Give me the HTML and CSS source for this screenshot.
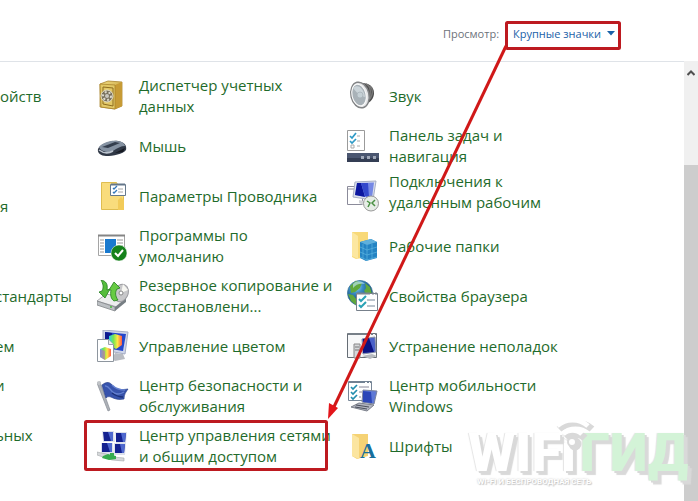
FILE: index.html
```
<!DOCTYPE html>
<html lang="ru">
<head>
    <meta charset="UTF-8">
    <title>Все элементы панели управления</title>
    <link rel="stylesheet" href="styles.css">
</head>
<body>

    <header class="toolbar">
        <span id="viewLabel">Просмотр:</span>
        <button class="view-btn" type="button" aria-describedby="viewLabel" aria-haspopup="true">
            Крупные значки
            <svg width="8" height="5" viewBox="0 0 8 5" aria-hidden="true"><path d="M0 0h8L4 4.600z" fill="#1a62a8"/></svg>
        </button>
    </header>

    <div class="content">
        <main class="items">
            <a class="item" href="#">ойств</a>
            <a class="item" href="#">
                <svg class="icon" viewBox="0 0 32 32">
                    <defs>
                        <linearGradient id="gold" x2="1" y2="1"><stop offset="0" stop-color="#f3df86"/><stop offset="1" stop-color="#b98e28"/></linearGradient>
                    </defs>
                    <path d="M3 4l8-3 14 1v24l-7 3-15-2z" fill="url(#gold)" stroke="#a9842c" stroke-width=".8"/>
                    <path d="M18 5l7-3v24l-7 3z" fill="#c79b35"/>
                    <path d="M3 4l15 1v24L4 27z" fill="#e2c866" stroke="#a9842c" stroke-width=".8"/>
                    <path d="M6 7l10 1v18L6 24z" fill="none" stroke="#8e6d21"/>
                    <circle cx="10" cy="16" r="6" fill="#77705e" stroke="#e5dfc9"/>
                    <circle cx="10" cy="16" r="4" fill="none" stroke="#dcd9cd" stroke-width="2" stroke-dasharray="2 2"/>
                    <circle cx="10" cy="16" r="2" fill="#c9c7c0"/>
                </svg>
                <span>Диспетчер учетных<br>данных</span>
            </a>
            <a class="item" href="#">
                <svg class="icon" viewBox="0 0 32 32">
                    <path d="M15 3c7 0 12 4 12 10 0 5-3 9-9 12z" fill="#4b4b4b"/>
                    <path d="M19 4c5 2 6 10 1 19M23 6c3 3 3 8 0 13" fill="none" stroke="#777" stroke-width="1.500"/>
                    <ellipse cx="13" cy="15" rx="9" ry="13" transform="rotate(-13 13 15)" fill="#e4e5e7" stroke="#818385" stroke-width="1.500"/>
                    <ellipse cx="12" cy="15" rx="7" ry="11" transform="rotate(-13 12 15)" fill="#a9b2b8" stroke="#fbfbfb"/>
                    <path d="M12 15L6 8c5-5 11 1 12 9z" fill="#cbd4d9"/>
                    <circle cx="13" cy="15" r="3" fill="#c5d0d5" stroke="#a5afb6" stroke-width=".7"/>
                </svg>
                <span>Звук</span>
            </a>

            <span></span>
            <a class="item" href="#">
                <svg class="icon" viewBox="0 0 32 32">
                    <path d="M1 19c2-5 14-9 20-8 6 1 9 4 8 9-3 4-13 6-20 6-5 0-9-3-8-7z" fill="#303846"/>
                    <path d="M2 17c3-4 12-7 18-6 5 0 8 3 8 5-4 0-8 2-12 5-4 2-12 1-14-4z" fill="#8592a2"/>
                    <path d="M2 20c4 3 9 4 14 1" fill="none" stroke="#bcc4ce" stroke-width="1.500"/>
                    <path d="M5 17l13-5 5 1-12 5z" fill="#343e4d"/>
                    <path d="M18 23l10-5-2 4z" fill="#151920"/>
                </svg>
                <span>Мышь</span>
            </a>
            <a class="item" href="#">
                <svg class="icon" viewBox="0 0 32 32">
                    <path d="M.5.500h17v20H.500z" fill="#fff" stroke="#9b9b9b"/>
                    <path d="M3 6l2 2 4-5M3 11l2 2 4-4" fill="none" stroke="#2e9ac6" stroke-width="1.700"/>
                    <path d="M4 15h3v3H4zM10 6h3M10 11h3M10 16h3" fill="none" stroke="#aaa"/>
                    <path d="M0 23h32v9H0z" fill="#4a5670"/>
                    <path d="M0 28h32v4H0z" fill="#343e54"/>
                    <path d="M14 26h3v3h-3zM20 26h3v3h-3zM26 26h3v3h-3z" fill="#a1a9b9"/>
                </svg>
                <span>Панель задач и<br>навигация</span>
            </a>

            <a class="item second-line" href="#">я</a>
            <a class="item" href="#">
                <svg class="icon" viewBox="0 0 32 32">
                    <path d="M4.500 2.500h15l7 14v13h-22z" fill="#f9dc7c" stroke="#dfbd50"/>
                    <path d="M21 30V20l3-3 3 3v10z" fill="#f2cb59"/>
                    <path d="M13.500 4.500h15v11h-15z" fill="#fff" stroke="#66798b"/>
                    <path d="M14 4.500h14" stroke="#65778a" stroke-width="2"/>
                    <path d="M16 8l1 1 3-3M16 12l1 1 3-3" fill="none" stroke="#3478ba" stroke-width="1.300"/>
                    <path d="M21 9h5M21 12h5" stroke="#a6a6a6"/>
                </svg>
                <span>Параметры Проводника</span>
            </a>
            <a class="item tall" href="#">
                <svg class="icon" viewBox="0 0 32 32">
                    <path d="M.5 6.500h15v18H.500z" fill="#fff" stroke="#8b8b9a"/>
                    <path d="M1 9h15" stroke="#8b8b9a"/>
                    <path d="M8 2l21-1-3 19-20-3z" fill="#dbe0ee" stroke="#a7afc4"/>
                    <path d="M10 3l17-.500L25 18 8 15z" fill="#7588e5"/>
                    <path d="M10 3h4l4 14L8 15z" fill="#0c179f"/>
                    <path d="M14 3h7l1 14-4-1z" fill="#3348cc"/>
                    <path d="M12 20l9 2v5l-9-4z" fill="#d1d3d6"/>
                    <circle cx="24" cy="23.500" r="7.500" fill="#e6ede6" stroke="#999"/>
                    <path d="M20 21l3 2-2 4M28 20l-3 3 3 3" fill="none" stroke="#4a9143" stroke-width="1.500"/>
                </svg>
                <span>Подключения к<br>удаленным рабочим</span>
            </a>

            <span></span>
            <a class="item" href="#">
                <svg class="icon" viewBox="0 0 32 32">
                    <path d="M1.500 5.500h26v20h-26z" fill="#fff" stroke="#a5a5a5"/>
                    <path d="M1 5.500h27" stroke="#858585" stroke-width="2"/>
                    <path d="M3 10h4M3 13h4M3 16h4M3 19h4M3 22h4M20 10h6M20 13h6M20 16h6" stroke="#999"/>
                    <path d="M8 9h11v14H8z" fill="#1979ce"/>
                    <circle cx="22" cy="23" r="8" fill="#15821b" stroke="#fff" stroke-width=".5"/>
                    <path d="M18 23l3 3 5-6" fill="none" stroke="#fff" stroke-width="2"/>
                </svg>
                <span>Программы по<br>умолчанию</span>
            </a>
            <a class="item" href="#">
                <svg class="icon" viewBox="0 0 32 32">
                    <path d="M5 2h16v25l-12 2-4-2z" fill="#f8d978"/>
                    <path d="M5 2l6 4v23l-6-3z" fill="#fce7a0"/>
                    <path d="M13 12l11-3 6 3v16l-11 3-6-3z" fill="#2483c3"/>
                    <path d="M13 12l11-3 6 3-10 3z" fill="#5fb0dc"/>
                    <path d="M20 15v16M13 17l7 3 10-3M13 22l7 3 10-3M13 27l7 3 10-3M25 14v15M16 14v14" fill="none" stroke="#5cb4e0" stroke-width=".7"/>
                </svg>
                <span>Рабочие папки</span>
            </a>

            <a class="item cut" href="#">стандарты</a>
            <a class="item" href="#">
                <svg class="icon" viewBox="0 0 32 32">
                    <path d="M0 21l9-7 20 4-9 9z" fill="#edeeef" stroke="#adadb2"/>
                    <path d="M0 21l18 6v4L0 25z" fill="#bcc0c4" stroke="#818589" stroke-width=".8"/>
                    <path d="M18 27l11-9v4l-11 9z" fill="#777e83"/>
                    <ellipse cx="24" cy="13" rx="7" ry="9" transform="rotate(25 24 13)" fill="#c8c8ca" stroke="#9b9ba0"/>
                    <path d="M24 13l2-9 5 6z" fill="#f7f7f2"/>
                    <circle cx="24" cy="13" r="2" fill="#fff" stroke="#888"/>
                    <path d="M4 0c5 1 7 4 6 10l3-1-5 9-6-6 3-1c2-4 1-7-1-11z" fill="#55bd3c" stroke="#237e20" stroke-width=".8"/>
                    <path d="M17 21c-3-2-4-6-3-11h-2l5-8 6 6-3 1c-2 3-2 7 1 11z" fill="#67cb43" stroke="#237e20" stroke-width=".8"/>
                    <circle cx="14" cy="27" r="1" fill="#47bc38"/>
                </svg>
                <span>Резервное копирование и<br>восстановлени...</span>
            </a>
            <a class="item" href="#">
                <svg class="icon" viewBox="0 0 32 32">
                    <defs>
                        <radialGradient id="globe" cx=".35" cy=".25"><stop offset="0" stop-color="#a9dcf0"/><stop offset=".5" stop-color="#3c8fc6"/><stop offset="1" stop-color="#1c5c94"/></radialGradient>
                    </defs>
                    <circle cx="13" cy="13" r="12.500" fill="url(#globe)" stroke="#3a7495" stroke-width=".8"/>
                    <path d="M3 6l6-5 6 2-2 5-5 4-4 1zM18 3l5 4 2 7-5 1-3-4 2-3zM1 14l5 1 4 5-1 5-5-4z" fill="#60a83d"/>
                    <path d="M6 4c4-4 9-3 12 0-5-1-9 0-12 4z" fill="#bae3ee" opacity=".7"/>
                    <path d="M9.500 13.500h21v17h-21z" fill="#fff" stroke="#77808b"/>
                    <path d="M10 13.500h20" stroke="#7b8590" stroke-width="2" stroke-dasharray="13 2 2 1"/>
                    <path d="M12 19l2 2 5-5M12 25l2 2 5-5" fill="none" stroke="#2aa2b5" stroke-width="2"/>
                    <path d="M20 20h8M20 26h8" stroke="#76889a"/>
                </svg>
                <span>Свойства браузера</span>
            </a>

            <a class="item cut" href="#">ем</a>
            <a class="item" href="#">
                <svg class="icon" viewBox="0 0 32 32">
                    <defs>
                        <linearGradient id="rainbow"><stop offset="0" stop-color="#29d3e8"/><stop offset=".35" stop-color="#79e451"/><stop offset=".65" stop-color="#ffe843"/><stop offset="1" stop-color="#ff5a4c"/></linearGradient>
                    </defs>
                    <path d="M6 0l25 2-3 22L6 20z" fill="#cfd6e9" stroke="#a4acc4"/>
                    <path d="M8 2l21 2-3 17L8 18z" fill="#2447cc"/>
                    <path d="M8 2l7 1-2 16-5-1z" fill="#0c1990"/>
                    <path d="M18 23l8 1 2 5-10 2-3-2z" fill="#b9bcc2"/>
                    <path d="M12 6l6-2 7 2v9l-6 4-7-4z" fill="url(#rainbow)"/>
                    <path d="M.5 9.500h11l5 5v17H.500z" fill="#fff" stroke="#8e969f"/>
                    <path d="M11.500 9.500v5h5" fill="#eee" stroke="#9ba2aa"/>
                    <path d="M3 19l5-2 6 2v7l-6 4-5-3z" fill="url(#rainbow)"/>
                    <path d="M3 19l5 2v9l-5-3z" fill="#d84bce" opacity=".5"/>
                </svg>
                <span>Управление цветом</span>
            </a>
            <a class="item" href="#">
                <svg class="icon" viewBox="0 0 32 32">
                    <path d="M.5 3.500h29v24H.500z" fill="#f7f8f9" stroke="#666d75"/>
                    <path d="M1 4h28" stroke="#777f88" stroke-width="2" stroke-dasharray="21 2 2 2"/>
                    <path d="M7 14h6v14H7z" fill="#d5d7da" stroke="#888"/>
                    <path d="M8 17h4M8 20h4" stroke="#777"/>
                    <path d="M15 9l13-2 1 15-13 2z" fill="#4a60c8" stroke="#8990a6"/>
                    <path d="M16 9l6-1 5 14-11 1z" fill="#0b1282"/>
                    <path d="M15 26l10-2 5 2-7 3z" fill="#b6babf"/>
                </svg>
                <span>Устранение неполадок</span>
            </a>

            <a class="item first-line cut" href="#">и</a>
            <a class="item" href="#">
                <svg class="icon" viewBox="0 0 32 32">
                    <path d="M0 3l3-1 10 28-2 1z" fill="#aeb2b8" stroke="#858b93" stroke-width=".7"/>
                    <circle cx="2" cy="3" r="2" fill="#c1c4c8"/>
                    <path d="M5 5c5-4 8-3 11 1 4 4 8 4 15 3-2 3-4 5-4 10-6 1-9 0-13-2-3-1-4 0-5 1z" fill="#3753ac" stroke="#28418b" stroke-width=".7"/>
                    <path d="M8 6c4-1 5 5 9 7 4 2 7 1 10-1M15 5c4 4 8 5 13 5" fill="none" stroke="#6480cf" stroke-width="1.500"/>
                    <path d="M15 13c4 3 7 4 11 4" fill="none" stroke="#1c3178" stroke-width="1.500"/>
                </svg>
                <span>Центр безопасности и<br>обслуживания</span>
            </a>
            <a class="item" href="#">
                <svg class="icon" viewBox="0 0 32 32">
                    <path d="M1.500 1.500h23v19h-23z" fill="#fff" stroke="#778697"/>
                    <path d="M2 2h22" stroke="#718192" stroke-width="2" stroke-dasharray="16 2 2 1"/>
                    <path d="M4 7l2 2 4-4M4 12l2 2 4-4M4 17l2 2 4-4" fill="none" stroke="#238eae" stroke-width="1.700"/>
                    <path d="M12 7h10M12 12h3M12 17h2" stroke="#889"/>
                    <path d="M16 10l14 1-3 13-12-2z" fill="#5f79d6" stroke="#7c849d"/>
                    <path d="M16 11l8 1 1 11-9-1z" fill="#2c46b8"/>
                    <path d="M12 23l15 2-7 6-16-4z" fill="#b1b4bf" stroke="#7b7f8a"/>
                    <path d="M9 25l13 2M8 27l12 2" stroke="#4b505c"/>
                </svg>
                <span>Центр мобильности<br>Windows</span>
            </a>

            <a class="item first-line cut" href="#">ьных</a>
            <a class="item" href="#">
                <svg class="icon" viewBox="0 0 32 32">
                    <path d="M5 1h12l1 11H6zM18 2h12l-1 11H19zM4 13h12l1 11H4zM17 13h12l-1 12H17z" fill="#dde1ec"/>
                    <path d="M6 2h10v9H7zM19 3h10l-1 9h-9zM5 13h10v9H5zM18 14h10l-1 9h-9z" fill="#142190"/>
                    <path d="M11 2h5v9h-2zM24 3h5l-1 9h-2zM10 13h5v9h-2zM23 14h5l-1 9h-2z" fill="#4f69cf"/>
                    <path d="M0 22l9 2 7 3 11 1v3l-12-1-15-5z" fill="#d5d8da" stroke="#a1a6aa" stroke-width=".6"/>
                    <path d="M6 26l5-2 8 2v3l-7 1-7-2z" fill="#36ac4e"/>
                    <path d="M13 23h4v4h-4z" fill="#36ac4e"/>
                </svg>
                <span>Центр управления сетями<br>и общим доступом</span>
            </a>
            <a class="item" href="#">
                <svg class="icon" viewBox="0 0 32 32">
                    <path d="M5 4h16v22l-11 3-5-3z" fill="#f5d274"/>
                    <path d="M5 4l7 4v21l-7-3z" fill="#fbe5a0"/>
                    <text class="font-letter" x="13" y="28">A</text>
                </svg>
                <span>Шрифты</span>
            </a>
        </main>

        <div class="scrollbar">
            <button class="scroll-up" type="button" aria-label="Вверх">
                <svg width="8" height="6" viewBox="0 0 8 6"><path d="M.5 5L4 1.500 7.500 5" fill="none" stroke="#505050" stroke-width="2"/></svg>
            </button>
            <div class="scroll-thumb"></div>
        </div>
    </div>

    <!-- highlight frames and the arrow between them -->
    <svg class="marks" width="640" height="480" viewBox="0 0 640 480" aria-hidden="true">
        <g fill="none" stroke="#bd1a20" stroke-width="3">
            <rect x="506.500" y="22.500" width="113" height="26" rx="1"/>
            <rect x="85.500" y="421.500" width="241" height="48" rx="1"/>
            <path d="M506 46L332 411" stroke="#d01818"/>
        </g>
        <path d="M328 419l1-16 9 5z" fill="#e3151a"/>
    </svg>

    <div class="watermark">
        <svg class="wifi" width="42" height="34" viewBox="0 0 42 34" aria-hidden="true">
            <g fill="none" stroke="#d9d9d9" stroke-width="7">
                <path d="M6 12c9-8 24-8 33 0M13 21c5-5 14-5 19 0"/>
                <circle cx="22" cy="27" r="3"/>
            </g>
            <g fill="none" stroke="#fff" stroke-width="5">
                <path d="M4 9c9-8 22-8 31 0M10 17c5-5 14-5 19 0"/>
            </g>
            <circle cx="19" cy="25" r="4" fill="#fff" stroke="#d9d9d9" stroke-width="2"/>
        </svg>
        <div class="brand">WIFi<span>ГИД</span></div>
        <div class="slogan">WI-FI И БЕСПРОВОДНАЯ СЕТЬ</div>
    </div>

</body>
</html>
```
FILE: styles.css
```
body {
    margin: 0;
    min-height: 100vh;
    display: flex;
    flex-direction: column;
    position: relative;
    overflow: hidden;
    font-family: "Open Sans", "Noto Sans", sans-serif;
    background-color: #fff;
    color: #1f6b2b;
}

.toolbar {
    display: flex;
    align-items: center;
    justify-content: flex-end;
    gap: 14px;
    height: 61px;
    box-sizing: border-box;
    padding: 5px 83px 0 0;
    font-size: 11px;
    color: #6d727a;
}

.view-btn {
    display: flex;
    align-items: center;
    gap: 6px;
    padding: 0;
    border: none;
    background: none;
    font: inherit;
    color: #1a62a8;
    cursor: pointer;
}

.content {
    flex: 1;
    display: flex;
}

.items {
    flex: 1;
    display: grid;
    grid-template-columns: 97px 250px 1fr;
    grid-auto-rows: 50px;
    padding-top: 9px;
    border-top: 1px solid #dfe3e8;
}

.item {
    display: flex;
    align-items: center;
    gap: 10px;
    font-size: 15px;
    line-height: 21px;
    color: inherit;
    text-decoration: none;
    white-space: nowrap;
}

.item:hover {
    text-decoration: underline;
}

.item.first-line {
    align-items: flex-start;
    padding-top: 4px;
}

.item.second-line {
    align-items: flex-end;
    padding-bottom: 4px;
}

.item.tall {
    align-items: flex-start;
}

/* labels scrolled off the left side */
.item.cut {
    margin-left: -5px;
}

.icon {
    width: 32px;
    height: 32px;
    flex: none;
}

.tall .icon {
    align-self: center;
}

.font-letter {
    font: bold 22px "Liberation Serif", serif;
    fill: #176f9c;
}

.scrollbar {
    width: 14px;
    display: flex;
    flex-direction: column;
    background-color: #f0f0f0;
}

.scroll-up {
    height: 20px;
    margin-bottom: 84px;
    padding: 0;
    border: none;
    background: none;
}

.scroll-thumb {
    flex: 1;
    background-color: #cdcdcd;
}

.marks {
    position: absolute;
    top: 0;
    left: 0;
    pointer-events: none;
}

.watermark {
    position: absolute;
    right: 10px;
    bottom: 14px;
    font-family: Roboto, sans-serif;
    color: #fff;
    pointer-events: none;
}

.brand {
    font-size: 54px;
    line-height: 48px;
    font-weight: 900;
    text-shadow: 2px 2px 0 #d9d9d9, 4px 4px 1px #d9d9d9, -1px 0 1px #e4e4e4;
}

.brand span {
    margin-left: 4px;
    color: #d3f3d7;
}

.slogan {
    padding-left: 9px;
    font-size: 8px;
    line-height: 10px;
    font-weight: 700;
    text-shadow: 0 0 2px #bbb, 1px 1px 1px #ccc;
}

.wifi {
    position: absolute;
    left: 85px;
    top: -12px;
}
```
